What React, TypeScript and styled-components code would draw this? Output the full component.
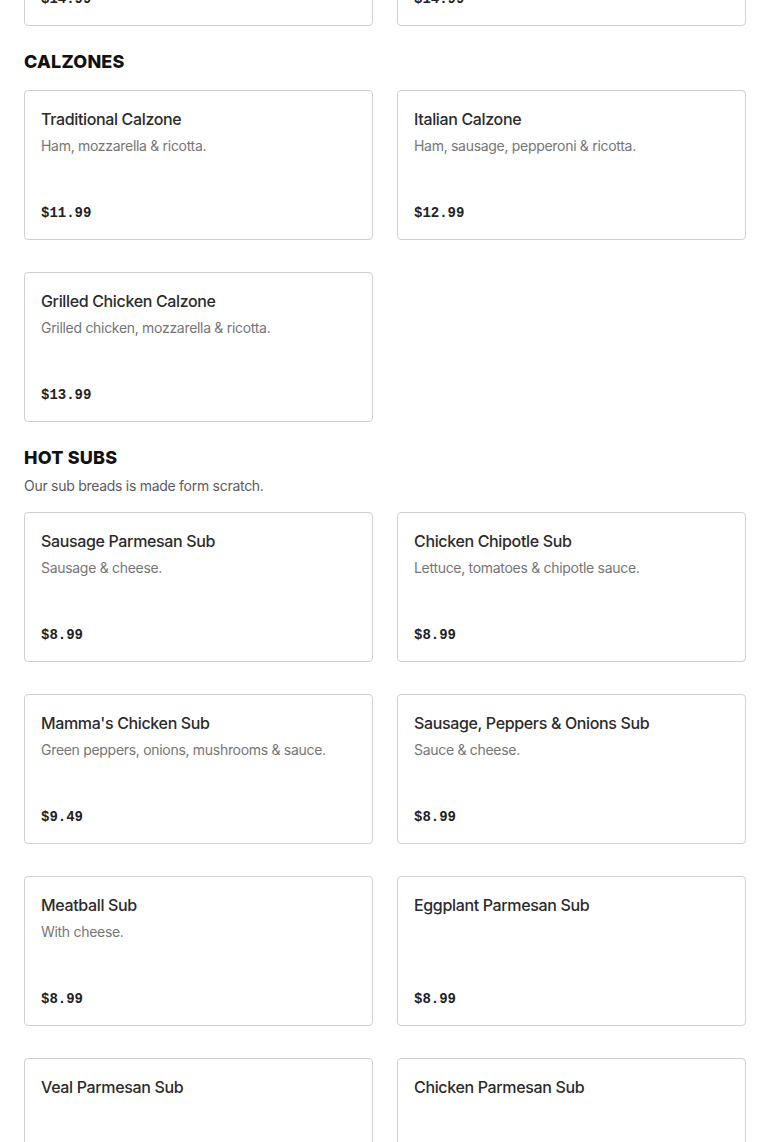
import React from "react";
import styled, { createGlobalStyle } from "styled-components";

const Global = createGlobalStyle`
  html, body { margin: 0; padding: 0; background: #ffffff; }
  body { font-family: Inter, "Liberation Sans", sans-serif; -webkit-font-smoothing: antialiased; overflow: hidden; }
`;

type Item = { name: string; desc?: string; price: string };
type Section = { title?: string; note?: string; items: Item[] };

const sections: Section[] = [
  {
    items: [
      { name: "Specialty Pizza", price: "$14.99" },
      { name: "Specialty Pizza", price: "$14.99" },
    ],
  },
  {
    title: "CALZONES",
    items: [
      { name: "Traditional Calzone", desc: "Ham, mozzarella & ricotta.", price: "$11.99" },
      { name: "Italian Calzone", desc: "Ham, sausage, pepperoni & ricotta.", price: "$12.99" },
      { name: "Grilled Chicken Calzone", desc: "Grilled chicken, mozzarella & ricotta.", price: "$13.99" },
    ],
  },
  {
    title: "HOT SUBS",
    note: "Our sub breads is made form scratch.",
    items: [
      { name: "Sausage Parmesan Sub", desc: "Sausage & cheese.", price: "$8.99" },
      { name: "Chicken Chipotle Sub", desc: "Lettuce, tomatoes & chipotle sauce.", price: "$8.99" },
      { name: "Mamma's Chicken Sub", desc: "Green peppers, onions, mushrooms & sauce.", price: "$9.49" },
      { name: "Sausage, Peppers & Onions Sub", desc: "Sauce & cheese.", price: "$8.99" },
      { name: "Meatball Sub", desc: "With cheese.", price: "$8.99" },
      { name: "Eggplant Parmesan Sub", price: "$8.99" },
      { name: "Veal Parmesan Sub", price: "$8.99" },
      { name: "Chicken Parmesan Sub", price: "$8.99" },
    ],
  },
];

/* the page is shown scrolled: the previous section's last row is mostly above the fold */
const Page = styled.main`
  padding: 0 24px;
  margin-top: -124px;
`;

const Block = styled.section<{ $first?: boolean }>`
  padding-top: ${(p) => (p.$first ? "0" : "24px")};
`;

const Heading = styled.h2`
  margin: 0;
  font-family: Inter, "Liberation Sans", sans-serif;
  font-weight: 800;
  font-size: 18px;
  line-height: 24px;
  color: #111111;
  letter-spacing: 0.2px;
`;

const Note = styled.p`
  margin: 6px 0 1px;
  font-size: 14px;
  line-height: 20px;
  letter-spacing: -0.28px;
  color: #5c5c5c;
`;

const Grid = styled.div<{ $spaced: boolean }>`
  display: grid;
  grid-template-columns: 1fr 1fr;
  column-gap: 24px;
  row-gap: 32px;
  margin-top: ${(p) => (p.$spaced ? "16px" : "0")};
`;

const Card = styled.article`
  box-sizing: border-box;
  height: 150px;
  border: 1px solid #d0d0d0;
  border-radius: 4px;
  padding: 16px 16px 14px;
  display: flex;
  flex-direction: column;
`;

const Name = styled.h3`
  margin: 0;
  font-size: 16px;
  line-height: 24px;
  font-weight: 500;
  letter-spacing: -0.35px;
  color: #2b2b2b;
`;

const Desc = styled.p`
  margin: 5px 0 0;
  font-size: 14px;
  line-height: 20px;
  letter-spacing: -0.3px;
  color: #767676;
`;

const Price = styled.span`
  margin-top: auto;
  font-family: "Liberation Mono", "DejaVu Sans Mono", monospace;
  font-weight: 700;
  font-size: 14px;
  line-height: 24px;
  color: #222222;
`;

export default function App() {
  return (
    <>
      <Global />
      <Page>
        {sections.map((s, i) => (
          <Block key={i} $first={i === 0}>
            {s.title && <Heading>{s.title}</Heading>}
            {s.note && <Note>{s.note}</Note>}
            <Grid $spaced={!!s.title}>
              {s.items.map((it, j) => (
                <Card key={j}>
                  <Name>{it.name}</Name>
                  {it.desc && <Desc>{it.desc}</Desc>}
                  <Price>{it.price}</Price>
                </Card>
              ))}
            </Grid>
          </Block>
        ))}
      </Page>
    </>
  );
}
